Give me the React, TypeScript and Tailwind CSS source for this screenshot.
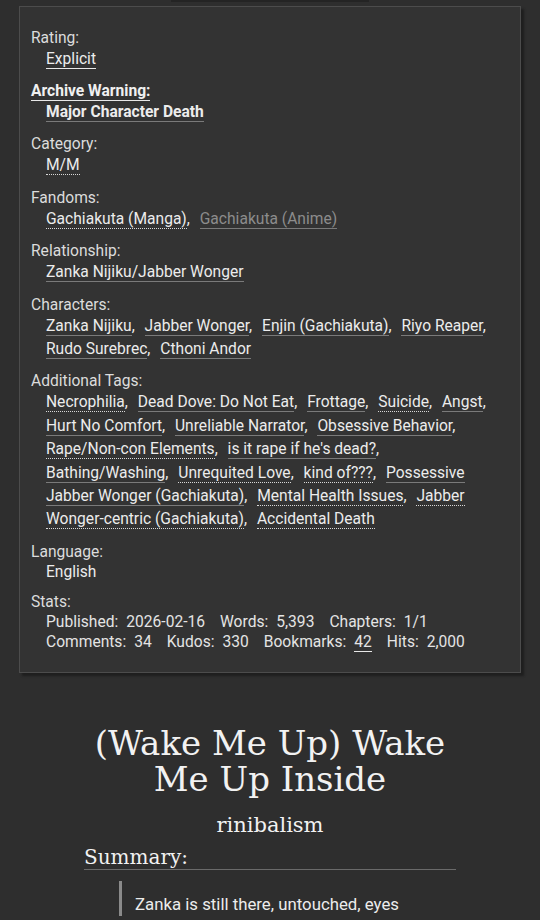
import React from 'react';

type Tag = { text: string; dotted?: boolean; dim?: boolean; bright?: boolean };

const sans = { fontFamily: 'Roboto, "Noto Sans", sans-serif' };

const TagList: React.FC<{ tags: Tag[] }> = ({ tags }) => (
  <div className="ml-[15px] leading-[23.4px] text-[#ececec]">
    {tags.map((t, i) => (
      <React.Fragment key={i}>
        <span
          className={`border-b ${t.dotted ? 'border-dotted border-[#d8d8d8]' : t.bright ? 'border-solid border-[#e8e8e8]' : 'border-solid border-[#7a7a7a]'} ${t.dim ? 'text-[#8c8c8c]' : ''}`}
        >
          {t.text}
        </span>
        {i < tags.length - 1 && (
          <>
            <span className="mr-[6px]">,</span>{' '}
          </>
        )}
      </React.Fragment>
    ))}
  </div>
);

const Group: React.FC<{ label: React.ReactNode; children: React.ReactNode; last?: boolean }> = ({ label, children, last }) => (
  <div className={last ? '' : 'mb-[10px]'}>
    <div className="leading-5 text-[#dcdcdc]">{label}</div>
    {children}
  </div>
);

const Stat: React.FC<{ label: string; value: React.ReactNode }> = ({ label, value }) => (
  <span className="mr-[15px] inline-block">
    <span>{label}</span>
    <span className="ml-[8px]">{value}</span>
  </span>
);

export default function App() {
  return (
    <div className="min-h-[920px] bg-[#2e2e2e]" style={sans}>
      <div className="mx-auto h-[2px] w-[198px] bg-[#242424]" />
      <div className="mx-[19px] mt-[4px] border border-[#4c4c4c] bg-[#333333] pb-[20px] pl-[11px] pr-[12px] pt-[20.5px] text-[15.6px] shadow-[3px_3px_2px_#1e1e1e]">
        <Group label="Rating:">
          <TagList tags={[{ text: 'Explicit', bright: true }]} />
        </Group>
        <Group label={<span className="border-b border-[#e8e8e8] font-bold text-[#f0f0f0]">Archive Warning:</span>}>
          <div className="font-bold">
            <TagList tags={[{ text: 'Major Character Death' }]} />
          </div>
        </Group>
        <Group label="Category:">
          <TagList tags={[{ text: 'M/M', dotted: true }]} />
        </Group>
        <Group label="Fandoms:">
          <TagList tags={[{ text: 'Gachiakuta (Manga)', dotted: true }, { text: 'Gachiakuta (Anime)', dim: true }]} />
        </Group>
        <Group label="Relationship:">
          <TagList tags={[{ text: 'Zanka Nijiku/Jabber Wonger' }]} />
        </Group>
        <Group label="Characters:">
          <TagList
            tags={[
              { text: 'Zanka Nijiku' },
              { text: 'Jabber Wonger' },
              { text: 'Enjin (Gachiakuta)' },
              { text: 'Riyo Reaper' },
              { text: 'Rudo Surebrec' },
              { text: 'Cthoni Andor' },
            ]}
          />
        </Group>
        <Group label="Additional Tags:">
          <TagList
            tags={[
              { text: 'Necrophilia', dotted: true },
              { text: 'Dead Dove: Do Not Eat' },
              { text: 'Frottage' },
              { text: 'Suicide', dotted: true },
              { text: 'Angst' },
              { text: 'Hurt No Comfort' },
              { text: 'Unreliable Narrator' },
              { text: 'Obsessive Behavior' },
              { text: 'Rape/Non-con Elements', dotted: true },
              { text: "is it rape if he's dead?" },
              { text: 'Bathing/Washing' },
              { text: 'Unrequited Love', dotted: true },
              { text: 'kind of???', dotted: true },
              { text: 'Possessive Jabber Wonger (Gachiakuta)' },
              { text: 'Mental Health Issues', dotted: true },
              { text: 'Jabber Wonger-centric (Gachiakuta)', dotted: true },
              { text: 'Accidental Death', dotted: true },
            ]}
          />
        </Group>
        <Group label="Language:">
          <div className="ml-[15px] leading-5 text-[#ececec]">English</div>
        </Group>
        <Group label="Stats:" last>
          <div className="ml-[15px] leading-5 text-[#e4e4e4]">
            <Stat label="Published:" value="2026-02-16" />
            <Stat label="Words:" value="5,393" />
            <Stat label="Chapters:" value="1/1" />
            <Stat label="Comments:" value="34" />
            <Stat label="Kudos:" value="330" />
            <Stat label="Bookmarks:" value={<span className="border-b border-[#e8e8e8]">42</span>} />
            <Stat label="Hits:" value="2,000" />
          </div>
        </Group>
      </div>

      <div className="mx-auto mt-[52px] w-[372px] text-[#f2f2f2]" style={{ fontFamily: '"DejaVu Serif", "Liberation Serif", serif' }}>
        <h2 className="text-center text-[34px] leading-[36px]">(Wake Me Up) Wake Me Up Inside</h2>
        <h3 className="mt-[14px] text-center text-[21px] leading-7">rinibalism</h3>
        <div className="mt-[7px] border-b border-[#6a6a6a] text-[20px] leading-[23px]">Summary:</div>
        <blockquote className="ml-[35px] mt-[11px] border-l-[3px] border-[#8a8a8a] pl-[13px] pt-[11px] text-[16.8px] leading-6 text-[#ececec]" style={sans}>
          <p>Zanka is still there, untouched, eyes</p>
        </blockquote>
      </div>
    </div>
  );
}
